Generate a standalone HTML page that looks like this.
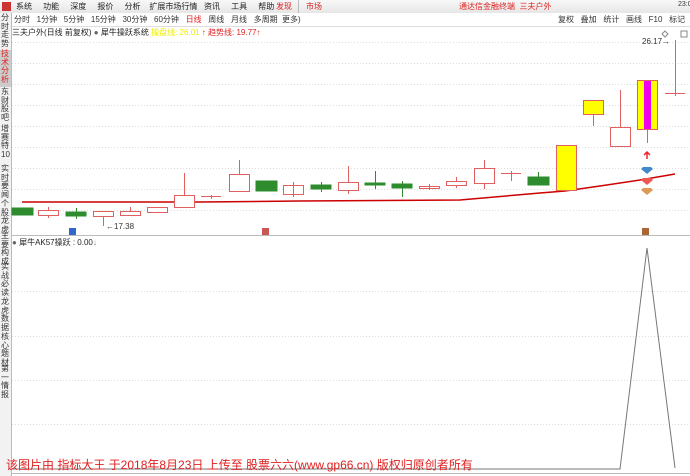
<!DOCTYPE html><html><head><meta charset="utf-8"><style>
body{margin:0;width:690px;height:476px;overflow:hidden;background:#fff;font-family:"Liberation Sans","Noto Sans CJK SC",sans-serif;font-size:8px;position:relative}
.a{position:absolute;white-space:nowrap}
</style></head><body>
<div class="a" style="left:0;top:0;width:690px;height:13px;background:linear-gradient(#f8f8f8,#e6e6e6);border-bottom:1px solid #c8c8c8"></div>
<div class="a" style="left:2px;top:2px;width:9px;height:9px;background:#c33"></div>
<div class="a" style="left:16px;top:1px;font-size:8px;color:#222;word-spacing:0">系统&nbsp;&nbsp;&nbsp;&nbsp;&nbsp;功能&nbsp;&nbsp;&nbsp;&nbsp;&nbsp;深度&nbsp;&nbsp;&nbsp;&nbsp;&nbsp;报价&nbsp;&nbsp;&nbsp;&nbsp;&nbsp;分析&nbsp;&nbsp;&nbsp;&nbsp;扩展市场行情&nbsp;&nbsp;&nbsp;资讯&nbsp;&nbsp;&nbsp;&nbsp;&nbsp;工具&nbsp;&nbsp;&nbsp;&nbsp;&nbsp;帮助</div>
<div class="a" style="left:276px;top:1px;color:#d22">发现</div>
<div class="a" style="left:306px;top:1px;color:#d22">市场</div>
<div class="a" style="left:298px;top:0;width:1px;height:13px;background:#bbb"></div>
<div class="a" style="left:459px;top:1px;color:#d22">通达信金融终端&nbsp;&nbsp;三夫户外</div>
<div class="a" style="left:678px;top:1px;color:#333;font-size:7px">23:0</div>
<div class="a" style="left:0;top:13px;width:690px;height:13px;background:#fff;border-bottom:1px solid #ddd"></div>
<div class="a" style="left:14px;top:14px;color:#333">分时&nbsp;&nbsp;&nbsp;1分钟&nbsp;&nbsp;&nbsp;5分钟&nbsp;&nbsp;&nbsp;15分钟&nbsp;&nbsp;&nbsp;30分钟&nbsp;&nbsp;&nbsp;60分钟&nbsp;&nbsp;&nbsp;<span style="color:#d22">日线</span>&nbsp;&nbsp;&nbsp;周线&nbsp;&nbsp;&nbsp;月线&nbsp;&nbsp;&nbsp;多周期&nbsp;&nbsp;更多)</div>
<div class="a" style="left:558px;top:14px;color:#333">复权&nbsp;&nbsp;&nbsp;叠加&nbsp;&nbsp;&nbsp;统计&nbsp;&nbsp;&nbsp;画线&nbsp;&nbsp;&nbsp;F10&nbsp;&nbsp;&nbsp;标记&nbsp;&nbsp;-自</div>
<div class="a" style="left:12px;top:27px;color:#222">三夫户外(日线 前复权) <span style="color:#666">●</span> 犀牛操跃系统 <span style="color:#ee0">操盘线: 26.01</span> <span style="color:#d22">↑ 趋势线: 19.77↑</span></div>
<div class="a" style="left:0;top:13px;width:11px;height:463px;background:#f2f2f2;border-right:1px solid #bbb"></div>
<div class="a" style="left:0;top:50px;width:11px;height:37px;background:#ccc"></div>
<div class="a" style="left:1px;top:14px;width:10px;font-size:8px;line-height:8.7px;color:#333;white-space:normal">
<div style="height:36px">分时走势</div><div style="height:38px;color:#d22">技术分析</div><div style="height:37px">东财股吧</div><div style="height:40px">增赛特10</div><div style="height:35px">实时要闻</div><div style="height:32px">个股龙虎</div><div style="height:31px">主要构成</div><div style="height:35px">实战必读</div><div style="height:35px">龙虎数据</div><div style="height:32px">核心题材</div><div style="height:35px">第一情报</div></div>
<svg class="a" style="left:0;top:0" width="690" height="476">
<g stroke="#ddd" stroke-dasharray="1,2" stroke-width="1">
<line x1="12" y1="42.5" x2="690" y2="42.5"/><line x1="12" y1="63.5" x2="690" y2="63.5"/><line x1="12" y1="84.5" x2="690" y2="84.5"/><line x1="12" y1="105.5" x2="690" y2="105.5"/><line x1="12" y1="126.5" x2="690" y2="126.5"/><line x1="12" y1="147.5" x2="690" y2="147.5"/><line x1="12" y1="168.5" x2="690" y2="168.5"/><line x1="12" y1="189.5" x2="690" y2="189.5"/><line x1="12" y1="210.5" x2="690" y2="210.5"/>
<line x1="12" y1="291.5" x2="690" y2="291.5"/><line x1="12" y1="336.5" x2="690" y2="336.5"/><line x1="12" y1="380.5" x2="690" y2="380.5"/><line x1="12" y1="424.5" x2="690" y2="424.5"/></g>
<line x1="12" y1="235.5" x2="690" y2="235.5" stroke="#bbb"/>
<line x1="12" y1="473.5" x2="690" y2="473.5" stroke="#bbb"/>
<polyline points="22,202 200,202 300,201 460,200 540,193 565,191 600,186 640,180 675,174" fill="none" stroke="#c00" stroke-width="1.5"/>
<g stroke="#e06060" fill="#fff" stroke-width="1">
<line x1="48.5" y1="207" x2="48.5" y2="218"/><rect x="38.5" y="210.5" width="20" height="5"/>
<line x1="103.5" y1="211" x2="103.5" y2="226"/><rect x="93.5" y="211.5" width="20" height="5"/>
<line x1="130.5" y1="207" x2="130.5" y2="215"/><rect x="120.5" y="211.5" width="20" height="4"/>
<rect x="147.5" y="207.5" width="20" height="5"/>
<line x1="184.5" y1="173" x2="184.5" y2="208"/><rect x="174.5" y="195.5" width="20" height="12"/>
<line x1="201" y1="196.5" x2="221" y2="196.5"/><line x1="211.5" y1="195" x2="211.5" y2="199"/>
<line x1="239.5" y1="160" x2="239.5" y2="191"/><rect x="229.5" y="174.5" width="20" height="17"/>
<rect x="283.5" y="185.5" width="20" height="9"/><line x1="293.5" y1="182" x2="293.5" y2="197"/>
<line x1="348.5" y1="166" x2="348.5" y2="194"/><rect x="338.5" y="182.5" width="20" height="8"/>
<rect x="419.5" y="186.5" width="20" height="2"/><line x1="429.5" y1="184" x2="429.5" y2="190"/>
<line x1="456.5" y1="177" x2="456.5" y2="188"/><rect x="446.5" y="181.5" width="20" height="4"/>
<line x1="484.5" y1="160" x2="484.5" y2="189"/><rect x="474.5" y="168.5" width="20" height="15"/>
<line x1="501" y1="173.5" x2="521" y2="173.5"/><line x1="511.5" y1="171" x2="511.5" y2="181"/>
<line x1="593.5" y1="114" x2="593.5" y2="126"/>
<line x1="620.5" y1="90" x2="620.5" y2="127"/><rect x="610.5" y="127.5" width="20" height="19"/>
<line x1="647.5" y1="130" x2="647.5" y2="143"/>
<line x1="675.5" y1="40" x2="675.5" y2="96"/><line x1="665" y1="93.5" x2="685" y2="93.5"/>
</g>
<g fill="#2e8b2e" stroke="#2e8b2e">
<rect x="12" y="208" width="21" height="7"/><rect x="66" y="212" width="20" height="4"/><line x1="76.5" y1="208" x2="76.5" y2="219"/>
<rect x="256" y="181" width="21" height="10"/>
<rect x="311" y="185" width="20" height="4"/><line x1="321.5" y1="182" x2="321.5" y2="192"/>
<rect x="365" y="183" width="20" height="2"/><line x1="375.5" y1="171" x2="375.5" y2="189"/>
<rect x="392" y="184" width="20" height="4"/><line x1="402.5" y1="181" x2="402.5" y2="197"/>
<rect x="528" y="177" width="21" height="8"/><line x1="538.5" y1="172" x2="538.5" y2="185"/>
</g>
<g stroke="#e06060" stroke-width="1"><rect x="556.5" y="145.5" width="20" height="45" fill="#ff0"/><rect x="583.5" y="100.5" width="20" height="14" fill="#ff0"/><rect x="637.5" y="80.5" width="20" height="49" fill="#ff0"/></g>
<rect x="644" y="81" width="7" height="48" fill="#e0e"/>
<path d="M647 159 v-6 M644 155 l3-3 3 3" stroke="#e22" fill="none" stroke-width="1.5"/>
<path d="M643 167 h8 l2 2 -6 5 -6 -5z" fill="#48c"/><path d="M643 178 h8 l2 2 -6 5 -6 -5z" fill="#e55"/><path d="M643 188 h8 l2 2 -6 5 -6 -5z" fill="#d95"/>
<rect x="69" y="228" width="7" height="7" fill="#36c"/><rect x="262" y="228" width="7" height="7" fill="#c55"/><rect x="642" y="228" width="7" height="7" fill="#a63"/>
<polyline points="12,469 620,469 647,248 675,468" fill="none" stroke="#777"/>
<path d="M665 31 l3 3 -3 3 -3 -3z" fill="none" stroke="#888"/><rect x="681" y="31" width="6" height="6" fill="none" stroke="#888"/>
</svg>
<div class="a" style="left:106px;top:222px;color:#333">←17.38</div>
<div class="a" style="left:642px;top:37px;color:#333">26.17→</div>
<div class="a" style="left:12px;top:237px;color:#222"><span style="color:#666">●</span> 犀牛AK57操跃 : 0.00<span style="color:#888">↓</span></div>
<div class="a" style="left:6px;top:456px;font-size:12px;color:#e02020">该图片由 指标大王 于2018年8月23日 上传至 股票六六(www.gp66.cn) 版权归原创者所有</div>
</body></html>
